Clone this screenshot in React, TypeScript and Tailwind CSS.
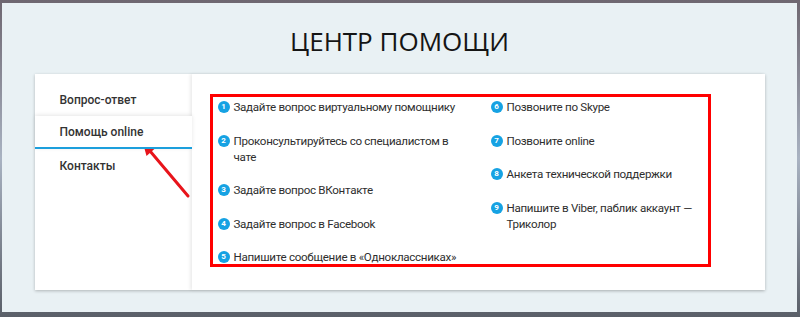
import React from "react";

const leftItems = [
  "Задайте вопрос виртуальному помощнику",
  "Проконсультируйтесь со специалистом в\nчате",
  "Задайте вопрос ВКонтакте",
  "Задайте вопрос в Facebook",
  "Напишите сообщение в «Одноклассниках»",
];

const rightItems = [
  "Позвоните по Skype",
  "Позвоните online",
  "Анкета технической поддержки",
  "Напишите в Viber, паблик аккаунт — Триколор",
];

const navItems = ["Вопрос-ответ", "Помощь online", "Контакты"];

function Item({ n, text, width }: { n: number; text: string; width: string }) {
  return (
    <div className="flex items-start gap-[4px]">
      <span className="mt-[2px] flex h-[12px] w-[12px] flex-none items-center justify-center rounded-full bg-[#16a2e3] text-[8px] font-bold leading-none text-white">
        {n}
      </span>
      <span className={`${width} whitespace-pre-line text-[11.6px] leading-[16px] tracking-[-0.3px] text-[#2e2e2e]`}>
        {text}
      </span>
    </div>
  );
}

export default function App() {
  return (
    <div
      className="h-[317px] w-[800px] bg-gradient-to-b from-[#6e6770] via-[#a9b3c2] to-[#5a5f68] pb-[5px] pl-[2px] pr-[3px] pt-[3px]"
      style={{ fontFamily: 'Roboto, "Noto Sans", sans-serif' }}
    >
      <div className="flex h-full flex-col items-center bg-[#e9f1f4]">
        {/* заголовок */}
        <h1
          className="mt-[20px] h-[51px] text-[26px] font-normal leading-[36px] text-[#151515]"
          style={{ fontFamily: '"Open Sans", sans-serif' }}
        >
          ЦЕНТР ПОМОЩИ
        </h1>

        {/* карточка */}
        <div className="relative flex h-[216px] w-[730px] bg-white shadow-[0_1px_3px_rgba(0,0,0,0.25)]">
          <nav className="flex w-[157px] flex-none flex-col pt-[9px]">
            {navItems.map((label, i) => (
              <div
                key={label}
                className={
                  i === 1
                    ? "relative z-10 flex h-[33px] items-center border-b-2 border-[#1c9fdc] bg-white pl-[25px] text-[12px] font-medium text-[#333] shadow-[0_-1px_4px_rgba(0,0,0,0.1)]"
                    : "flex h-[33px] items-center pl-[25px] text-[12px] font-medium text-[#333]"
                }
              >
                {label}
              </div>
            ))}
          </nav>

          <div className="flex-1 bg-white pb-[23px] pl-[18px] pr-[54px] pt-[20px] shadow-[-2px_0_3px_rgba(0,0,0,0.08)]">
            <div className="h-full border-[3px] border-[#ff0000] pl-[5px] pt-[2px]">
              <div className="grid grid-cols-[273px_1fr]">
                <div className="flex flex-col gap-[17.5px]">
                  {leftItems.map((t, i) => (
                    <Item key={t} n={i + 1} text={t} width="w-[250px]" />
                  ))}
                </div>
                <div className="flex flex-col gap-[17.5px]">
                  {rightItems.map((t, i) => (
                    <Item key={t} n={i + 6} text={t} width="w-[200px]" />
                  ))}
                </div>
              </div>
            </div>
          </div>

          {/* стрелка */}
          <svg
            className="pointer-events-none absolute left-0 top-0"
            width="730"
            height="216"
            viewBox="0 0 730 216"
          >
            <line x1="153" y1="122" x2="115" y2="77" stroke="#e8141b" strokeWidth="3" strokeLinecap="round" />
            <polygon points="108,69 120.5,74 111.5,82" fill="#e8141b" />
          </svg>
        </div>
      </div>
    </div>
  );
}
